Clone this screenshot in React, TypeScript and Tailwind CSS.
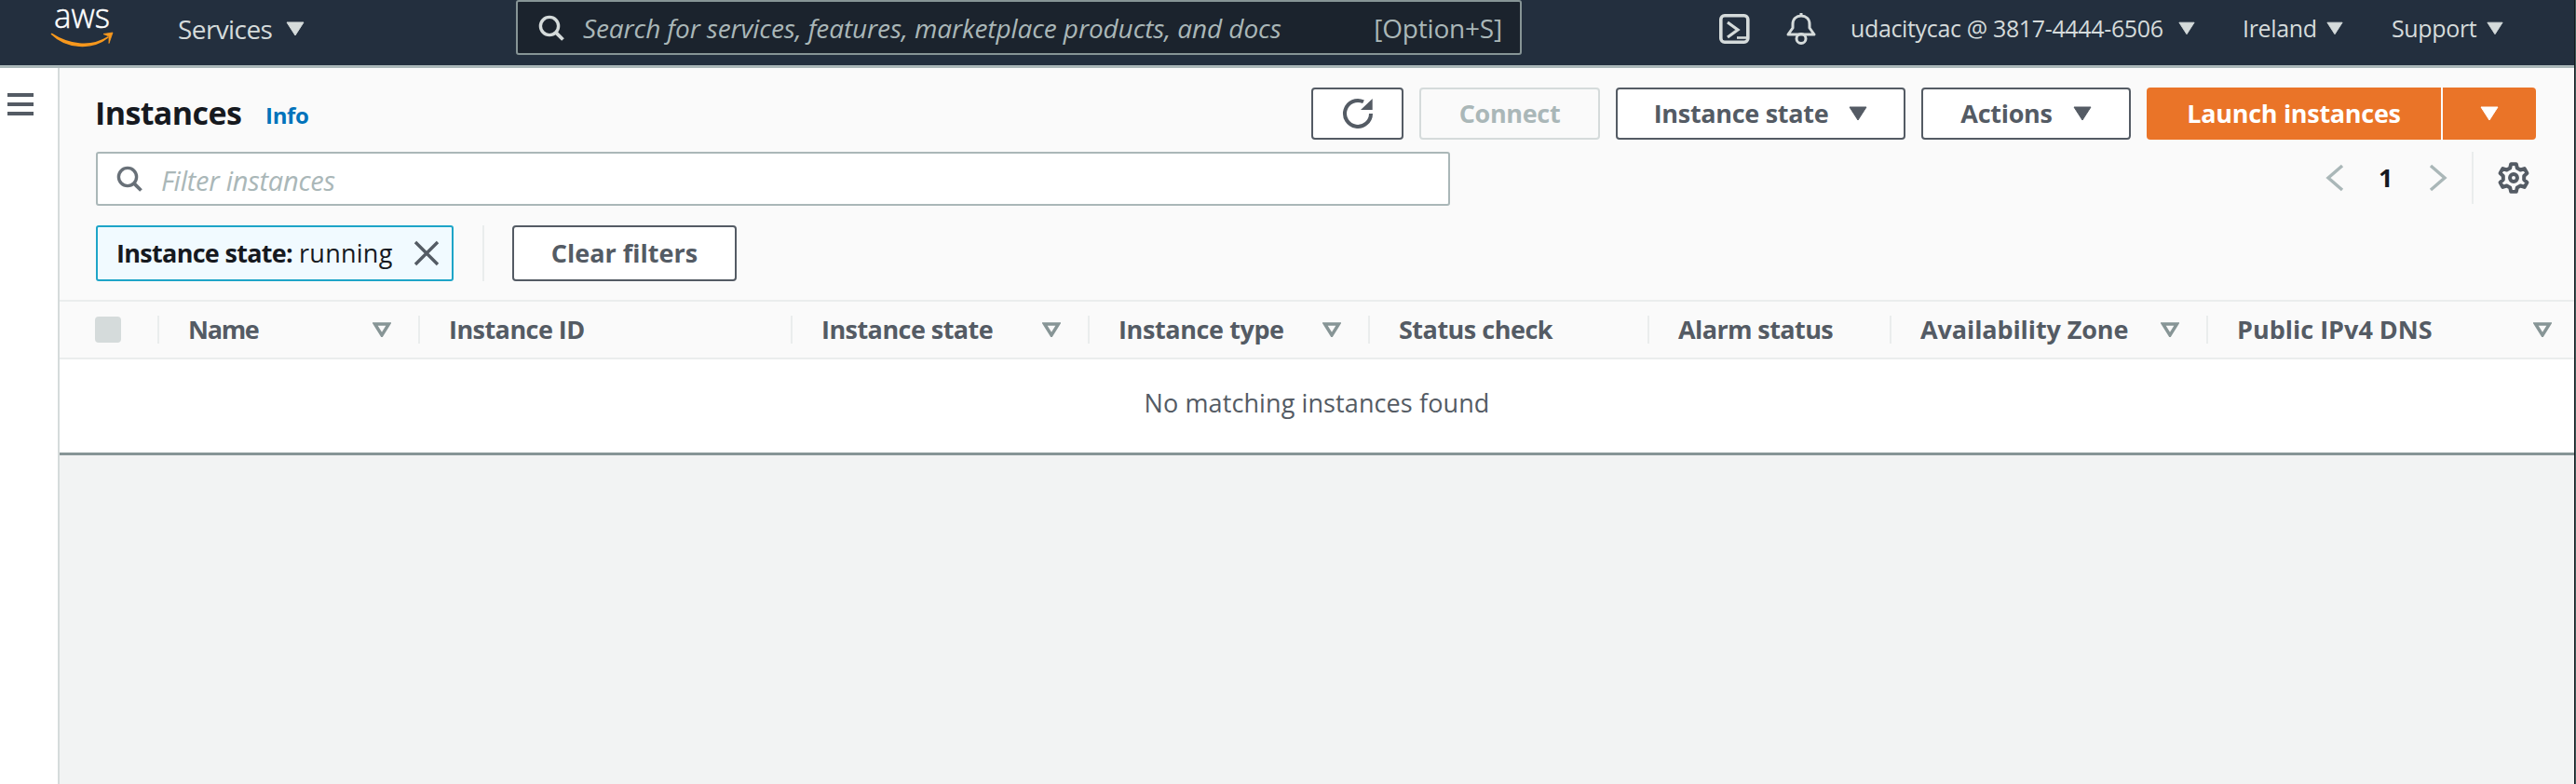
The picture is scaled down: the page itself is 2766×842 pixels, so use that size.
const font = "font-['Open_Sans',sans-serif]";

function Caret({ className = "", w = 20, h = 16 }: { className?: string; w?: number; h?: number }) {
  return (
    <svg width={w} height={h} viewBox="0 0 20 16" className={className} fill="currentColor">
      <path d="M1 1 H19 L10 15 Z" stroke="currentColor" strokeWidth="1" strokeLinejoin="round" />
    </svg>
  );
}

function SortIcon() {
  return (
    <svg width="20" height="16" viewBox="0 0 20 16" fill="none" className="text-[#879596]">
      <path d="M2.5 2 H17.5 L10 14 Z" stroke="currentColor" strokeWidth="3.4" strokeLinejoin="miter" />
    </svg>
  );
}

function Search({ size = 28, color = "currentColor" }: { size?: number; color?: string }) {
  return (
    <svg width={size} height={size} viewBox="0 0 28 28" fill="none" stroke={color} strokeWidth="3.4">
      <circle cx="12" cy="12" r="9.6" />
      <path d="M18.8 18.8 L26.5 26.5" strokeWidth="3.8" />
    </svg>
  );
}

function Btn({ label, w, caret }: { label: string; w: string; caret?: boolean }) {
  return (
    <div className={`${w} h-[56px] rounded-[4px] border-2 border-[#545b64] bg-white flex items-center justify-center gap-[22px] text-[#545b64] text-[27px] font-bold tracking-[-0.3px]`}>
      <span>{label}</span>
      {caret && <Caret />}
    </div>
  );
}

const columns = [
  { label: "Name", w: "w-[280px]", sort: true, sortGap: "pr-[29px]", t: "tracking-[-1.300px]" },
  { label: "Instance ID", w: "w-[400px]", sort: false, sortGap: "", t: "tracking-[-0.55px]" },
  { label: "Instance state", w: "w-[319px]", sort: true, sortGap: "pr-[29px]", t: "tracking-[-0.55px]" },
  { label: "Instance type", w: "w-[301px]", sort: true, sortGap: "pr-[29px]", t: "tracking-[-0.4px]" },
  { label: "Status check", w: "w-[300px]", sort: false, sortGap: "", t: "tracking-[-0.5px]" },
  { label: "Alarm status", w: "w-[260px]", sort: false, sortGap: "", t: "tracking-[-0.6px]" },
  { label: "Availability Zone", w: "w-[340px]", sort: true, sortGap: "pr-[29px]", t: "tracking-[-0.1px]" },
  { label: "Public IPv4 DNS", w: "flex-1", sort: true, sortGap: "pr-[24px]", t: "tracking-[0px]" },
];

export default function App() {
  return (
    <div className={`${font} w-[2766px] h-[842px] overflow-hidden flex bg-white`}>
      <div className="w-[2764px] shrink-0 flex flex-col">
        <header className="h-[73px] shrink-0 bg-[#232f3e] border-b-[3px] border-[#aab7b8] flex items-start text-[#d5dbdb]">
          <div className="w-[191px] shrink-0 pl-[55px]">
            <svg width="66" height="54" viewBox="0 0 66 54" className="overflow-visible">
              <text x="3" y="30" fontFamily="'Open Sans',sans-serif" fontSize="37" fontWeight="300" fill="#ffffff" stroke="#ffffff" strokeWidth="0.5" textLength="60" lengthAdjust="spacingAndGlyphs">aws</text>
              <path d="M0.500 36.500 C 18 48, 42 52, 61 40 C 44 54, 16 52, 0.500 36.500 Z" fill="#f7981d" stroke="#f7981d" strokeWidth="1.600" strokeLinejoin="round" />
              <path d="M56 36.500 L66 35 L62 46.500 L62 39 Z" fill="#f7981d" stroke="#f7981d" strokeWidth="0.800" strokeLinejoin="round" />
            </svg>
          </div>
          <div className="w-[363px] shrink-0 h-[61px] flex items-center gap-[15px] text-[28px] tracking-[-0.6px]">
            <span>Services</span>
            <Caret />
          </div>
          <div className="w-[1080px] shrink-0 h-[59px] rounded-[3px] border-2 border-[#879596] bg-[#1b232d] text-[#aab7b8] flex items-center pl-[22px] pr-[19px] text-[28px]">
            <Search size={28} color="#d5dbdb" />
            <span className="ml-[20px] italic flex-1 whitespace-nowrap tracking-[-0.1px]">Search for services, features, marketplace products, and docs</span>
            <span className="tracking-[-0.2px]">[Option+S]</span>
          </div>
          <div className="flex-1 h-[61px] flex items-center text-[25px] tracking-[-0.35px] pl-[212px]">
            <svg width="33" height="32" viewBox="0 0 33 32" fill="none" stroke="#d5dbdb" className="shrink-0">
              <rect x="1.800" y="1.800" width="29" height="28.400" rx="4" strokeWidth="3.600" />
              <path d="M9 9 L20 17 L9 25" strokeWidth="3.200" />
              <path d="M19 25.500 H29" strokeWidth="2.600" />
            </svg>
            <svg width="32" height="34" viewBox="0 0 32 34" fill="none" stroke="#d5dbdb" className="ml-[39px] shrink-0">
              <path d="M16 0 V3" strokeWidth="3" />
              <path d="M2 23 L7 16 V12 C7 6 11 3 16 3 C21 3 25 6 25 12 V16 L30 23 Z" strokeWidth="3" strokeLinejoin="round" />
              <circle cx="16" cy="27.500" r="5" strokeWidth="3" />
            </svg>
            <span className="ml-[37px] w-[337px] shrink-0 whitespace-nowrap">udacitycac @ 3817-4444-6506</span>
            <Caret className="ml-[15px] shrink-0" w={18} h={15} />
            <span className="ml-[51px] w-[74px] shrink-0">Ireland</span>
            <Caret className="ml-[16px] shrink-0" w={18} h={15} />
            <span className="ml-[52px] w-[88px] shrink-0">Support</span>
            <Caret className="ml-[14px] shrink-0" w={18} h={15} />
          </div>
        </header>

        <div className="flex-1 flex min-h-0">
          <aside className="w-[62px] shrink-0 bg-white pl-[8px] pt-[27px] flex flex-col gap-[6px]">
            <div className="w-[28px] h-[4px] bg-[#545b64]" />
            <div className="w-[28px] h-[4px] bg-[#545b64]" />
            <div className="w-[28px] h-[4px] bg-[#545b64]" />
          </aside>
          <main className="flex-1 min-w-0 flex flex-col border-l-[2px] border-[#d5dbdb] bg-[#f2f3f3]">
            <section className="bg-[#fafafa] h-[251px] shrink-0 border-b-[2px] border-[#eaeded] pl-[39px] pt-[21px]">
              <div className="flex items-center h-[56px]">
                <h1 className="text-[34px] font-bold text-[#16191f] tracking-[-0.6px] leading-none w-[183px] -mt-[3px] -ml-[1px]">Instances</h1>
                <span className="text-[24px] font-bold text-[#0073bb] w-[1123px] tracking-[-0.3px] mt-[3px]">Info</span>
                <div className="flex gap-[17px]">
                  <div className="w-[99px] h-[56px] rounded-[4px] border-2 border-[#545b64] bg-white flex items-center justify-center">
                    <svg width="34" height="34" viewBox="0 0 34 34" fill="none" stroke="#545b64" strokeWidth="4">
                      <path d="M31 17 A14 14 0 1 1 23 4.300" />
                      <path d="M20 13 H32.700 V1 Z" fill="#545b64" stroke="none" />
                    </svg>
                  </div>
                  <div className="w-[194px] h-[56px] rounded-[4px] border-2 border-[#d5dbdb] bg-[#fafafa] flex items-center justify-center text-[#aab7b8] text-[27px] font-bold tracking-[-0.35px]">Connect</div>
                  <Btn label="Instance state" w="w-[311px]" caret />
                  <Btn label="Actions" w="w-[225px]" caret />
                  <div className="flex gap-[2px] text-white text-[27px] font-bold tracking-[-0.3px]">
                    <div className="w-[316px] h-[56px] rounded-l-[4px] bg-[#ea7428] flex items-center justify-center">Launch instances</div>
                    <div className="w-[100px] h-[56px] rounded-r-[4px] bg-[#ea7428] flex items-center justify-center"><Caret /></div>
                  </div>
                </div>
              </div>

              <div className="flex items-start mt-[13px]">
                <div className="w-[1454px] h-[58px] rounded-[3px] border-2 border-[#aab7b8] bg-white flex items-center pl-[20px]">
                  <Search size={28} color="#687078" />
                  <span className="ml-[20px] italic text-[#aab7b8] text-[29px] tracking-[-0.25px] mt-[3px]">Filter instances</span>
                </div>
                <div className="flex items-center h-[56px] ml-[940px]">
                  <svg width="20" height="30" viewBox="0 0 20 30" fill="none" stroke="#aab7b8" strokeWidth="3.4"><path d="M18 2 L3 15 L18 28" /></svg>
                  <span className="ml-[37px] w-[16px] text-[27px] font-bold text-[#16191f]">1</span>
                  <svg width="20" height="30" viewBox="0 0 20 30" fill="none" stroke="#aab7b8" strokeWidth="3.4" className="ml-[38px]"><path d="M2 2 L17 15 L2 28" /></svg>
                  <div className="ml-[26px] w-[2px] h-[56px] bg-[#eaeded]" />
                  <svg width="34" height="34" viewBox="0 0 24 24" fill="none" stroke="#545b64" strokeWidth="2.800" className="ml-[26px]">
                    <path d="M10 1.500 H14 L14.700 4.600 L17.200 6 L20.200 5 L22.200 8.500 L19.900 10.600 V13.400 L22.200 15.500 L20.200 19 L17.200 18 L14.700 19.400 L14 22.500 H10 L9.300 19.400 L6.800 18 L3.800 19 L1.800 15.500 L4.100 13.400 V10.600 L1.800 8.500 L3.800 5 L6.800 6 L9.300 4.600 Z" strokeLinejoin="round" />
                    <circle cx="12" cy="12" r="2.800" />
                  </svg>
                </div>
              </div>

              <div className="flex items-center mt-[21px] h-[60px]">
                <div className="w-[384px] h-[60px] rounded-[3px] border-2 border-[#1ea5c8] bg-[#f1faff] flex items-center pl-[20px] text-[#16191f] text-[27px]">
                  <span className="font-bold tracking-[-0.7px]">Instance state:</span>
                  <span className="ml-[7px] tracking-[0.25px]">running</span>
                  <svg width="28" height="28" viewBox="0 0 28 28" stroke="#545b64" strokeWidth="3.4" className="ml-[22px]"><path d="M2 2 L26 26 M26 2 L2 26" /></svg>
                </div>
                <div className="ml-[31px] w-[2px] h-[60px] bg-[#eaeded]" />
                <div className="ml-[30px] w-[241px] h-[60px] rounded-[4px] border-2 border-[#545b64] bg-white flex items-center justify-center text-[#545b64] text-[27px] font-bold">Clear filters</div>
              </div>
            </section>

            <div className="h-[62px] shrink-0 bg-[#fafafa] border-b-[2px] border-[#eaeded] flex items-center text-[#545b64] text-[27px] font-bold">
              <div className="w-[105px] shrink-0 pl-[38px]">
                <div className="w-[28px] h-[28px] rounded-[4px] bg-[#d5dbdb]" />
              </div>
              {columns.map((c) => (
                <div key={c.label} className={`${c.w} shrink-0 h-[30px] border-l-2 border-[#eaeded] pl-[31px] flex items-center justify-between ${c.sortGap} ${c.t}`}>
                  <span>{c.label}</span>
                  {c.sort && <SortIcon />}
                </div>
              ))}
            </div>
            <div className="h-[103px] shrink-0 bg-white border-b-[3px] border-[#879596] flex items-center justify-center pb-[6px] text-[#545b64] text-[27px] tracking-[0.1px]">
              No matching instances found
            </div>
            <div className="flex-1 bg-[#f2f3f3]" />
          </main>
        </div>
      </div>
      <div className="w-[1px] shrink-0 bg-[#16191f]" />
      <div className="w-[1px] shrink-0 bg-[#3d5a58]" />
    </div>
  );
}
